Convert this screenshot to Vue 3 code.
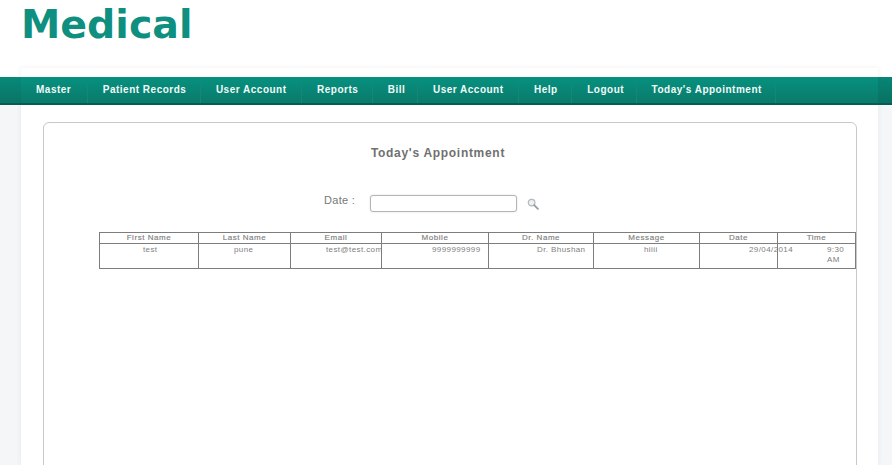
<script setup>
const menu = ['Master', 'Patient Records', 'User Account', 'Reports', 'Bill', 'User Account', 'Help', 'Logout', "Today's Appointment"]
const columns = [
  { head: 'First Name', value: 'test', width: 99, pad: 43 },
  { head: 'Last Name', value: 'pune', width: 92, pad: 35 },
  { head: 'Email', value: 'test@test.com', width: 91, pad: 35 },
  { head: 'Mobile', value: '9999999999', width: 107, pad: 50 },
  { head: 'Dr. Name', value: 'Dr. Bhushan', width: 105, pad: 48 },
  { head: 'Message', value: 'hiiii', width: 106, pad: 50 },
  { head: 'Date', value: '29/04/2014', width: 78, pad: 49 },
  { head: 'Time', value: '9:30 AM', width: 78, pad: 49 }
]
</script>

<template>
  <div class="page">
    <header class="brand">Medical</header>
    <div class="shell">
      <nav class="nav">
        <a v-for="(item, i) in menu" :key="i" class="nav-item">{{ item }}</a>
      </nav>
      <main class="card">
        <h1 class="title">Today's Appointment</h1>
        <div class="filter">
          <label class="filter-label">Date :</label>
          <input class="filter-input" type="text" />
          <svg class="filter-icon" width="12" height="12" viewBox="0 0 13 13" aria-hidden="true">
            <circle cx="5" cy="5" r="3.6" fill="#eef1f2" stroke="#b4b8ba" stroke-width="1.3" />
            <path d="M7.8 7.8 L11.8 11.8" stroke="#9a9ea0" stroke-width="2" stroke-linecap="round" />
          </svg>
        </div>
        <table class="grid">
          <colgroup>
            <col v-for="c in columns" :key="c.head" :style="{ width: c.width + 'px' }" />
          </colgroup>
          <thead>
            <tr>
              <th v-for="c in columns" :key="c.head">{{ c.head }}</th>
            </tr>
          </thead>
          <tbody>
            <tr>
              <td v-for="c in columns" :key="c.head" :style="{ paddingLeft: c.pad + 'px' }">{{ c.value }}</td>
            </tr>
          </tbody>
        </table>
      </main>
    </div>
  </div>
</template>

<style>
html, body { margin: 0; padding: 0; background: #fff; }
</style>

<style scoped>
.page {
  width: 892px;
  height: 465px;
  overflow: hidden;
  background: linear-gradient(#fff 105px, #f5f6f8 105px);
  font-family: "Liberation Sans", Arial, sans-serif;
}
.brand {
  height: 68px;
  box-sizing: border-box;
  padding: 2px 0 0 21px;
  color: #0f8f80;
  font-family: "DejaVu Sans", "Liberation Sans", sans-serif;
  font-weight: 700;
  font-size: 39.5px;
  line-height: 44px;
}
.shell {
  width: 857px;
  height: 397px;
  margin-left: 21px;
  padding-top: 9px;
  box-sizing: border-box;
  background: #fff;
  box-shadow: 0 0 5px rgba(60, 70, 90, 0.08);
}
.nav {
  display: flex;
  height: 28px;
  margin: 0 -14px 0 -21px;
  padding-left: 21px;
  box-sizing: border-box;
  background:
    linear-gradient(90deg, rgba(0, 0, 0, 0.05) 21px, transparent 21px, transparent 878px, rgba(0, 0, 0, 0.08) 878px),
    linear-gradient(#07917f, #0a7c6d 90%);
  border-bottom: 2px solid #075c51;
}
.nav-item {
  padding: 0 13.5px 0 15px;
  border-right: 1px solid #128877;
  color: #f1fbf9;
  font-size: 10px;
  font-weight: 700;
  line-height: 26px;
  letter-spacing: 0.5px;
  white-space: nowrap;
}
.nav-item:nth-child(1) { padding-right: 15.5px; }
.nav-item:nth-child(3) { padding-right: 14.5px; }
.nav-item:nth-child(5) { padding-right: 11.5px; }
.nav-item:nth-child(6) { padding-right: 14.5px; }
.nav-item:nth-child(8) { padding-right: 11.5px; }
.card {
  width: 814px;
  height: 420px;
  margin: 17px 0 0 22px;
  box-sizing: border-box;
  background: #fff;
  border: 1px solid #c8c8c8;
  border-radius: 6px;
  color: #777;
}
.title {
  margin: 23px 0 0;
  padding-right: 24px;
  color: #707070;
  font-size: 12px;
  font-weight: 700;
  line-height: 14px;
  letter-spacing: 0.7px;
  text-align: center;
}
.filter {
  display: flex;
  align-items: flex-start;
  margin: 35px 0 0 280px;
}
.filter-label {
  width: 46px;
  font-size: 11px;
  line-height: 12px;
  letter-spacing: 0.3px;
  margin-top: -1px;
}
.filter-input {
  width: 147px;
  height: 17px;
  box-sizing: border-box;
  margin: 0;
  padding: 0;
  background: #fff;
  border: 1px solid #b5b5b5;
  border-radius: 3px;
  box-shadow: 0 0 2px rgba(0, 0, 0, 0.15);
}
.filter-icon {
  margin: 3px 0 0 10px;
}
.grid {
  width: 757px;
  margin: 20px 0 0 55px;
  border-collapse: collapse;
  table-layout: fixed;
  font-size: 8px;
  letter-spacing: 0.4px;
  color: #808080;
}
.grid th, .grid td {
  border: 1px solid #7d7d7d;
  padding: 0;
  box-sizing: border-box;
  overflow: visible;
}
.grid th {
  height: 11px;
  font-weight: 400;
  line-height: 10px;
  letter-spacing: 0.55px;
  text-align: center;
  -webkit-text-stroke: 0.15px #808080;
}
.grid td {
  height: 25px;
  padding-top: 1px;
  line-height: 10px;
  text-align: left;
  vertical-align: top;
  word-break: keep-all;
}
.grid td:not(:last-child) { white-space: nowrap; }
</style>
